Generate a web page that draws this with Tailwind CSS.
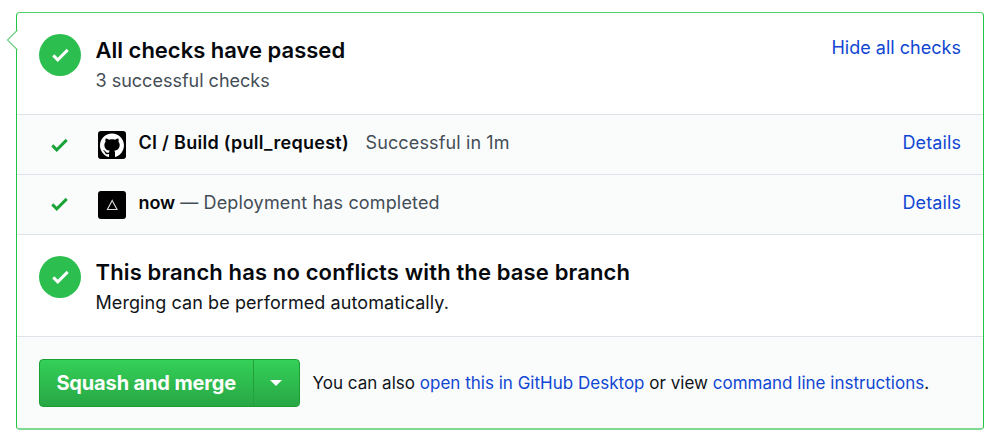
<!DOCTYPE html>
<html lang="en">
<head>
<meta charset="utf-8">
<title>Merge status</title>
<script src="https://cdn.jsdelivr.net/npm/@tailwindcss/browser@4"></script>
</head>
<body class="bg-white font-['Inter','Liberation_Sans',sans-serif] text-[#101418]">
<svg class="hidden">
  <symbol id="check" viewBox="0 0 12 16"><path fill="currentColor" d="M12 5l-8 8-4-4 1.500-1.500L4 10l6.500-6.500L12 5z"/></symbol>
</svg>
<main class="relative mt-3 ml-4 flex h-[418px] w-[968px] flex-col rounded-[4px] border border-b-2 border-[#1fc443] border-t-[#4fcf6a] border-b-[#80d990] whitespace-nowrap">
  <svg class="absolute -left-[11px] top-[16px]" width="12" height="22" viewBox="0 0 12 22"><path d="M12 1V21L1.500 11z" fill="#fff"/><path d="M11.500 1L1.500 11L11.500 21" fill="none" stroke="#6fd384" stroke-width="1.200"/></svg>

  <section class="flex h-[102px] shrink-0 items-start border-b border-[#dfe2e8] pt-[21px] pr-[22px] pl-[22px]">
    <div class="flex size-[42px] items-center justify-center rounded-full bg-[#2cbe4e] text-white"><svg class="h-[22px] w-[17px]"><use href="#check"/></svg></div>
    <div class="ml-[14.5px] grow">
      <h1 class="text-[22px] leading-[32px] font-semibold text-[#05080c]"><span>All checks have passed</span></h1>
      <p class="mt-px text-[18px] leading-[28px] text-[#444d56]"><span>3 successful checks</span></p>
    </div>
    <a class="text-[18px] leading-[28px] tracking-[0.02px] text-[#1046d2]"><span>Hide all checks</span></a>
  </section>

  <section class="flex h-[60px] shrink-0 items-center border-b border-[#dfe2e8] bg-[#fafcfc] pr-[22px] pl-[34px] text-[18px]">
    <svg class="mt-[1px] h-[22px] w-[17px] text-[#1aa338]"><use href="#check"/></svg>
    <svg class="mt-[1px] ml-[30.4px]" width="28" height="28" viewBox="0 0 28 28"><rect width="28" height="28" rx="3" fill="#000"/><path transform="translate(2 2.500) scale(1.500)" fill="#fff" d="M8 0C3.580 0 0 3.580 0 8c0 3.540 2.290 6.530 5.470 7.590.4.070.55-.17.55-.38 0-.19-.01-.82-.01-1.490-2.010.37-2.530-.49-2.690-.94-.09-.23-.48-.94-.82-1.130-.28-.15-.68-.52-.01-.53.63-.01 1.080.58 1.230.82.72 1.210 1.870.87 2.330.66.07-.52.28-.87.51-1.070-1.780-.2-3.640-.89-3.640-3.950 0-.87.31-1.590.82-2.150-.08-.2-.36-1.020.08-2.120 0 0 .67-.21 2.200.82.64-.18 1.320-.27 2-.27s1.360.09 2 .27c1.530-1.040 2.200-.82 2.200-.82.44 1.100.16 1.920.08 2.120.51.56.82 1.270.82 2.150 0 3.070-1.870 3.750-3.650 3.950.29.25.54.73.54 1.480 0 1.070-.01 1.930-.01 2.200 0 .21.15.46.55.38A8.010 8.010 0 0 0 16 8c0-4.420-3.580-8-8-8z"/></svg>
    <span class="mb-[5px] ml-[12px] font-semibold tracking-[0.29px] text-[#05080c]">CI / Build (pull_request)</span>
    <span class="mb-[5px] ml-[16.500px] tracking-[0.13px] text-[#444d56]">Successful in 1m</span>
    <a class="mb-[5px] ml-auto tracking-[0.1px] text-[#1046d2]"><span>Details</span></a>
  </section>

  <section class="flex h-[60px] shrink-0 items-center border-b border-[#dfe2e8] bg-[#fafcfc] pr-[22px] pl-[34px] text-[18px]">
    <svg class="mb-[2px] h-[22px] w-[17px] text-[#1aa338]"><use href="#check"/></svg>
    <svg class="mt-[1px] ml-[30.4px]" width="28" height="28" viewBox="0 0 28 28"><rect width="28" height="28" rx="3" fill="#000"/><path d="M14.200 9.500L19 18.500H9.400z" fill="none" stroke="#ddd" stroke-width="1.100"/></svg>
    <span class="mb-[5px] ml-[12px] font-semibold text-[#05080c]">now</span>
    <span class="mb-[5px] ml-[5px] tracking-[0.15px] text-[#444d56]">— Deployment has completed</span>
    <a class="mb-[5px] ml-auto tracking-[0.1px] text-[#1046d2]"><span>Details</span></a>
  </section>

  <section class="flex h-[102px] shrink-0 items-start border-b border-[#dfe2e8] pt-[21px] pl-[22px]">
    <div class="flex size-[42px] items-center justify-center rounded-full bg-[#2cbe4e] text-white"><svg class="h-[22px] w-[17px]"><use href="#check"/></svg></div>
    <div class="ml-[14.5px]">
      <h2 class="text-[22px] leading-[32px] font-semibold tracking-[0.13px] text-[#05080c]"><span>This branch has no conflicts with the base branch</span></h2>
      <p class="mt-px text-[18px] leading-[28px] tracking-[0.08px]"><span>Merging can be performed automatically.</span></p>
    </div>
  </section>

  <section class="flex grow items-center rounded-b-[3px] bg-[#fafcfc] pl-[22px]">
    <div class="flex h-[48px] w-[261px] rounded-[4px] border border-[#1a9f34] bg-linear-to-b from-[#34d058] to-[#28a745] text-white">
      <button class="w-[213.5px] border-r border-[#25a03f] text-[20px] font-bold tracking-[-0.14px]"><span>Squash and merge</span></button>
      <div class="flex grow items-center justify-center"><svg width="12" height="6" viewBox="0 0 12 6"><path fill="#fff" d="M0 0H12L6 6z"/></svg></div>
    </div>
    <p class="mt-[2px] ml-[12.500px] text-[17px] tracking-[0.01px]"><span>You can also <a class="text-[#1046d2]">open this in GitHub Desktop</a> or view <a class="text-[#1046d2]">command line instructions</a>.</span></p>
  </section>
</main>
</body>
</html>
